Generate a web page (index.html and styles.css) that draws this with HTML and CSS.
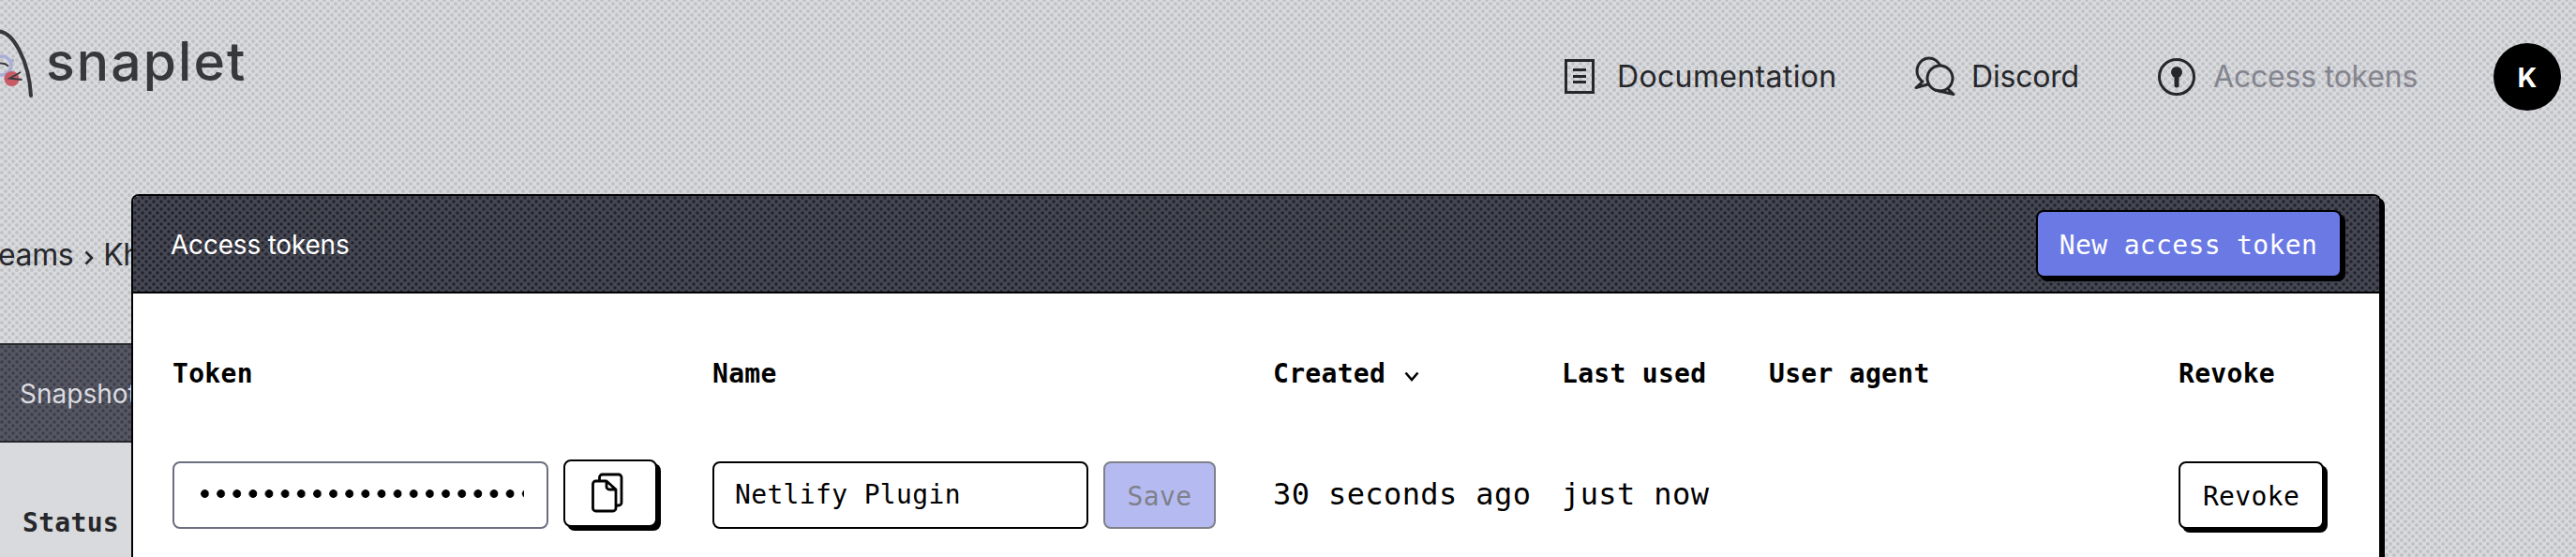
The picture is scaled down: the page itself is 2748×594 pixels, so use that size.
FILE: index.html
```html
<!DOCTYPE html>
<html lang="en">
<head>
<meta charset="utf-8">
<title>Snaplet – Access tokens</title>
<link rel="stylesheet" href="styles.css">
</head>
<body>
<header class="topbar">
  <a class="brand">
    <svg class="brand-mark" width="36" height="110" viewBox="0 0 36 110" fill="none">
      <circle cx="2" cy="70" r="10" stroke="#a9aed6" stroke-width="3.4"/>
      <path d="M10 64.500h5" stroke="#a9aed6" stroke-width="3"/>
      <circle cx="12.500" cy="84" r="8" fill="#c85b66"/>
      <path d="M-2 68q6-2 11 2.500M22 77 10.500 83.500l13 1.500" stroke="#3b3c40" stroke-width="2"/>
      <path d="M-2 33.500C14 33.500 31 65 33 102" stroke="#37383b" stroke-width="4" stroke-linecap="round"/>
    </svg>
    <span class="brand-name">snaplet</span>
  </a>
  <nav class="nav">
    <a class="nav-item docs">
      <svg class="icon" width="32" height="40" viewBox="0 0 32 40" fill="none" stroke="#26272b" stroke-width="3">
        <path d="M1.500 2.500h29v34h-29zM9 12.500h14M9 19.500h14M9 25.500h14"/>
      </svg>
      <span>Documentation</span>
    </a>
    <a class="nav-item discord">
      <svg class="icon" width="44" height="44" viewBox="0 0 44 44" fill="none" stroke="#26272b" stroke-width="3" stroke-linejoin="round">
        <circle cx="27.500" cy="23.500" r="13.500"/>
        <path d="M28 10C25 5 21 2 16 2 9 2 3 8 3 16c0 4 2 8 6 11l-7 6.500 14-4"/>
        <path d="M22 36l20 4.500-7-6.500"/>
      </svg>
      <span>Discord</span>
    </a>
    <a class="nav-item tokens">
      <svg class="icon" width="42" height="42" viewBox="0 0 42 42" fill="none" stroke="#26272b">
        <circle cx="21" cy="21" r="18.500" stroke-width="3"/>
        <circle cx="21" cy="16" r="6" fill="#26272b" stroke="none"/>
        <path d="M21 18v12" stroke-width="5" stroke-linecap="round"/>
      </svg>
      <span>Access tokens</span>
    </a>
    <span class="avatar">K</span>
  </nav>
</header>

<main class="page">
  <div class="crumbs">eams<svg class="sep" width="10" height="16" viewBox="0 0 10 16" fill="none" stroke="#26272b" stroke-width="2.600"><path d="M1.500 1.500 8 8l-6.500 6.500"/></svg>Kh</div>
  <section class="snapshots">
    <div class="snapshots-head">Snapshots</div>
    <div class="snapshots-body">Status</div>
  </section>
</main>

<section class="modal">
  <div class="modal-head">
    <h1 class="modal-title">Access tokens</h1>
    <button class="btn primary">New access token</button>
  </div>
  <div class="grid">
    <div class="th">Token</div>
    <div class="th">Name</div>
    <div class="th">Created<svg class="chev" width="16" height="12" viewBox="0 0 16 12" fill="none" stroke="#000" stroke-width="2.600"><path d="M1.500 1.500 8 9l6.500-7.500"/></svg></div>
    <div class="th">Last used</div>
    <div class="th">User agent</div>
    <div class="th">Revoke</div>

    <div class="cell">
      <div class="field masked"><span class="dots"></span></div>
      <button class="btn copy">
        <svg width="34" height="44" viewBox="0 0 34 44" fill="none" stroke="#000" stroke-width="2.800" stroke-linejoin="round">
          <path d="M8.500 9V5a3 3 0 0 1 3-3h17.500a3 3 0 0 1 3 3v27a3 3 0 0 1-3 3h-3"/>
          <path d="M16 9H4.500a3 3 0 0 0-3 3v26a3 3 0 0 0 3 3H23a3 3 0 0 0 3-3V18zM16 9v6a3 3 0 0 0 3 3h7"/>
        </svg>
      </button>
    </div>
    <div class="cell">
      <div class="field name">Netlify Plugin</div>
      <button class="btn save">Save</button>
    </div>
    <div class="cell text">30 seconds ago</div>
    <div class="cell text">just now</div>
    <div class="cell text"></div>
    <div class="cell"><button class="btn revoke">Revoke</button></div>
  </div>
</section>
</body>
</html>
```
FILE: styles.css
```css
* { box-sizing: border-box; }

body {
  margin: 0;
  width: 2748px;
  height: 594px;
  overflow: hidden;
  position: relative;
  color: #26272b;
  font-family: Inter, sans-serif;
  background-color: #d9dadd;
  background-image:
    radial-gradient(circle at 2px 2px, #c1c2c5 1.500px, transparent 2.300px),
    radial-gradient(circle at 6px 6px, #c1c2c5 1.500px, transparent 2.300px);
  background-size: 8px 8px;
  background-position: 0 -2px;
}

.topbar { display: flex; justify-content: space-between; height: 208px; }
.brand { display: flex; color: #37383b; }
.brand-mark { overflow: visible; }
.brand-name { margin: 31px 0 0 13px; font-size: 57px; line-height: 70px; font-weight: 500; letter-spacing: 2.100px; }

.nav { display: flex; align-items: center; height: 164px; padding-right: 16px; font-size: 32px; }
.nav-item { display: flex; align-items: center; white-space: nowrap; }
.nav-item span { position: relative; top: -1px; }
.docs span { margin-left: 24px; width: 317px; letter-spacing: 0.350px; }
.discord span { margin-left: 17px; width: 198px; letter-spacing: -0.200px; }
.tokens span { margin-left: 18px; width: 299px; color: #84848f; letter-spacing: -0.200px; }
.avatar { width: 72px; height: 72px; border-radius: 50%; background: #000; color: #fff; font-size: 29px; font-weight: 700; line-height: 73px; text-align: center; }

.page { width: 600px; }
.crumbs { height: 158px; padding-top: 42px; margin-left: -2px; font-size: 32px; line-height: 44px; white-space: nowrap; letter-spacing: -0.400px; }
.sep { margin: 0 10px 0 12px; }
.snapshots-head {
  height: 106px;
  padding-left: 21px;
  border-top: 2px solid #26272b;
  border-bottom: 2px solid #26272b;
  line-height: 104px;
  font-size: 28px;
  color: #dcdce0;
  background-color: #555762;
  background-image:
    radial-gradient(circle at 2px 2px, #3d3e49 1.300px, transparent 2.200px),
    radial-gradient(circle at 6px 6px, #3d3e49 1.300px, transparent 2.200px);
  background-size: 8px 8px;
}
.snapshots-body { height: 122px; padding: 68px 0 0 24px; background: #d9dadd; font: 700 28px/36px "DejaVu Sans Mono", monospace; letter-spacing: 0.300px; }

.modal {
  position: absolute;
  left: 140px;
  top: 207px;
  width: 2400px;
  height: 387px;
  border: 2px solid #000;
  border-bottom: 0;
  border-radius: 8px 8px 0 0;
  background: #fff;
  box-shadow: 4px 4px 0 #000;
  color: #000;
}
.modal-head {
  display: flex;
  align-items: center;
  justify-content: space-between;
  height: 104px;
  padding: 0 40px 0 40px;
  border-bottom: 2px solid #000;
  border-radius: 6px 6px 0 0;
  background-color: #454752;
  background-image:
    radial-gradient(circle at 2px 2px, #23242e 1.300px, transparent 2.200px),
    radial-gradient(circle at 6px 6px, #23242e 1.300px, transparent 2.200px);
  background-size: 8px 8px;
}
.modal-title { margin: 2px 0 0; font-size: 28px; font-weight: 400; color: #fff; letter-spacing: -0.200px; }

.btn {
  margin: 0;
  padding: 0;
  height: 72px;
  border: 2px solid #000;
  border-radius: 8px;
  background: #fff;
  box-shadow: 4px 4px 0 #000;
  color: #000;
  font: 28px "DejaVu Sans Mono", monospace;
  letter-spacing: 0.350px;
}
.primary { width: 326px; padding: 2px 1px 0 0; background: #6b79e4; color: #fff; }
.copy { display: flex; align-items: center; justify-content: center; width: 100px; margin: -4px 0 0 16px; }
.copy svg { margin-right: 6px; }
.save { width: 120px; margin-left: 16px; padding-top: 2px; background: #b5bbf1; border-color: #7f808a; color: #7f808a; box-shadow: none; }
.revoke { width: 155px; padding-top: 2px; }

.grid {
  display: grid;
  grid-template-columns: 576px 598px 308px 221px 437px 180px;
  padding: 68px 0 0 42px;
  font-family: "DejaVu Sans Mono", monospace;
}
.th { height: 111px; font-size: 28px; line-height: 36px; font-weight: 700; letter-spacing: 0.300px; }
.chev { margin-left: 20px; }
.cell { display: flex; height: 72px; align-items: center; white-space: nowrap; }
.text { font-size: 32px; letter-spacing: 0.400px; padding-bottom: 2px; }
.field { width: 401px; height: 72px; border: 2px solid #000; border-radius: 8px; padding-left: 22px; font-size: 28px; line-height: 67px; letter-spacing: 0.350px; }
.masked { border-color: #6c6f80; padding: 28px 0 0 28px; }
.dots { display: block; width: 345px; height: 9px; background: radial-gradient(circle at 4.500px 4.500px, #000 4px, transparent 4.700px) 0 0 / 17.150px 9px; }
```
